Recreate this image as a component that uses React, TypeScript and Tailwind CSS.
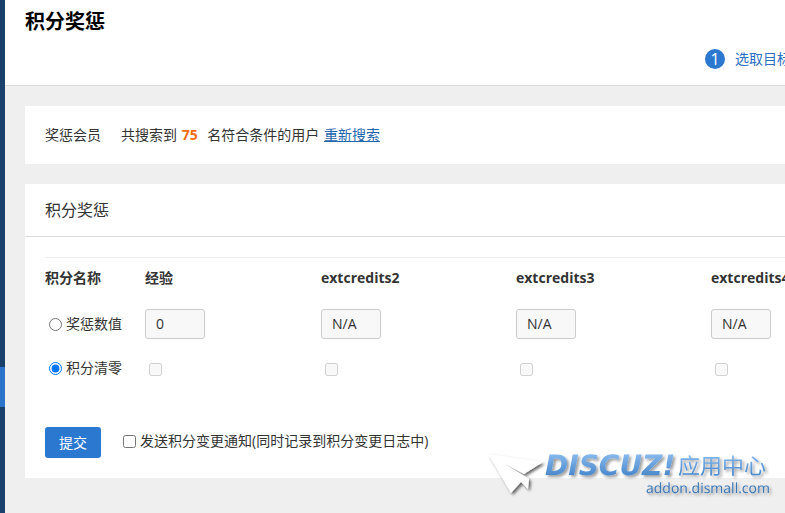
import { useState } from "react";
import { clsx } from "clsx";

const credits = [
  { id: "extcredits1", title: "经验", value: "0" },
  { id: "extcredits2", title: "extcredits2", value: "N/A" },
  { id: "extcredits3", title: "extcredits3", value: "N/A" },
  { id: "extcredits4", title: "extcredits4", value: "N/A" },
];

const fontStack = "font-['Open_Sans','Noto_Sans_CJK_SC',sans-serif]";

function Sidebar() {
  return (
    <nav className="w-[5px] shrink-0 bg-[#193f6b] pt-[367px]">
      <div className="h-10 bg-[#2b74c9]" />
    </nav>
  );
}

function Watermark() {
  return (
    <svg
      className="absolute right-3 bottom-[9px]"
      width="290"
      height="56"
      viewBox="0 0 290 56"
      textRendering="geometricPrecision"
      role="img"
      aria-label="DISCUZ! 应用中心"
    >
      <defs>
        <linearGradient id="logoBlue" x1="0" y1="0" x2="0" y2="1">
          <stop offset="0.2" stopColor="#82b6ea" />
          <stop offset="0.85" stopColor="#4585ca" />
        </linearGradient>
        <filter id="logoShadow" x="-10%" y="-10%" width="120%" height="140%">
          <feDropShadow dx="2" dy="2" stdDeviation="1.5" floodColor="#000" floodOpacity="0.4" />
        </filter>
        <filter id="planeShadow" x="-10%" y="-10%" width="130%" height="140%">
          <feDropShadow dx="2" dy="2" stdDeviation="1.5" floodColor="#000" floodOpacity="0.6" />
        </filter>
      </defs>
      <path
        d="M5 6 L60 14 L41 26 L22 16 L46 31 L45 41 L38 34 L28 45 Z"
        fill="#fff"
        filter="url(#planeShadow)"
      />
      <g filter="url(#logoShadow)">
        <text x="62" y="27" fontSize="28" className="font-['DejaVu_Sans',sans-serif] font-bold italic" fill="url(#logoBlue)">
          DISCUZ!
        </text>
        <text x="195" y="26" fontSize="22" className="font-['Noto_Sans_CJK_SC',sans-serif]" fill="url(#logoBlue)">
          应用中心
        </text>
        <text x="163" y="45" fontSize="14" className="font-['Open_Sans',sans-serif]" fill="#3a76b5">
          addon.dismall.com
        </text>
      </g>
    </svg>
  );
}

export default function App() {
  const [mode, setMode] = useState("clear");
  const [notify, setNotify] = useState(false);

  return (
    <div className={clsx("relative flex min-h-screen overflow-hidden bg-[#efefef] text-sm text-[#333]", fontStack)}>
      <Sidebar />

      <main className="min-w-0 flex-1">
        <header className="border-b border-[#dcdcdc] bg-white pt-[7px] pb-4 pl-5">
          <h1 className="text-xl leading-[30px] font-bold text-black">积分奖惩</h1>
          <ol className="mt-[11px] flex overflow-hidden pl-[680px] whitespace-nowrap text-[#2b6fc0]">
            <li className="flex h-[21px] items-center gap-2.5">
              <span className="flex size-5 items-center justify-center rounded-full bg-[#2b78d0] text-base text-white">1</span>
              选取目标
            </li>
          </ol>
        </header>

        <div className="space-y-5 pt-5 pl-5">
          <section className="flex gap-5 bg-white p-5 leading-[18px] whitespace-nowrap">
            <span>奖惩会员</span>
            <p>
              共搜索到 <strong className="mr-1.5 ml-px text-[#f26c14]">75</strong> 名符合条件的用户{" "}
              <a href="#search" className="ml-px text-[#1f66ad] underline">重新搜索</a>
            </p>
          </section>

          <section className="bg-white">
            <h2 className="border-b border-[#dcdcdc] px-5 py-3.5 text-base leading-6">积分奖惩</h2>

            <form className="pt-5 pb-5 pl-5" onSubmit={(e) => e.preventDefault()}>
              <div className="overflow-hidden">
                <table className="w-full min-w-[860px] table-fixed border-t border-[#efefef] text-left">
                  <colgroup>
                    <col className="w-[100px]" />
                    <col className="w-[176px]" />
                    <col className="w-[195px]" />
                    <col className="w-[195px]" />
                    <col />
                  </colgroup>
                  <thead>
                    <tr className="h-10">
                      <th>积分名称</th>
                      {credits.map((c) => (
                        <th key={c.id}>{c.title}</th>
                      ))}
                    </tr>
                  </thead>
                  <tbody>
                    <tr className="h-[52px]">
                      <td>
                        <label className="flex items-center gap-1 pl-1">
                          <input
                            type="radio"
                            name="mode"
                            className="mt-0.5 size-[13px]"
                            checked={mode === "update"}
                            onChange={() => setMode("update")}
                          />
                          奖惩数值
                        </label>
                      </td>
                      {credits.map((c) => (
                        <td key={c.id}>
                          <input
                            type="text"
                            aria-label={c.title}
                            defaultValue={c.value}
                            readOnly
                            className="block h-[30px] w-[60px] rounded-[3px] border border-[#ccc] bg-[#f8f8f8] px-2.5"
                          />
                        </td>
                      ))}
                    </tr>
                    <tr className="h-9">
                      <td>
                        <label className="flex items-center gap-1 pl-1">
                          <input
                            type="radio"
                            name="mode"
                            className="mt-0.5 size-[13px]"
                            checked={mode === "clear"}
                            onChange={() => setMode("clear")}
                          />
                          积分清零
                        </label>
                      </td>
                      {credits.map((c) => (
                        <td key={c.id}>
                          <input type="checkbox" aria-label={c.title} disabled className="mt-1 ml-1 block size-[13px]" />
                        </td>
                      ))}
                    </tr>
                  </tbody>
                </table>
              </div>

              <div className="mt-[41px] flex items-start gap-[22px] whitespace-nowrap">
                <button type="submit" className="h-[31px] rounded-[3px] bg-[#2b78d0] px-3.5 pt-0.5 text-white">提交</button>
                <label className="flex items-center gap-1 pt-1">
                  <input
                    type="checkbox"
                    className="mt-0.5 size-[13px]"
                    checked={notify}
                    onChange={(e) => setNotify(e.target.checked)}
                  />
                  发送积分变更通知(同时记录到积分变更日志中)
                </label>
              </div>
            </form>
          </section>
        </div>
      </main>

      <Watermark />
    </div>
  );
}
